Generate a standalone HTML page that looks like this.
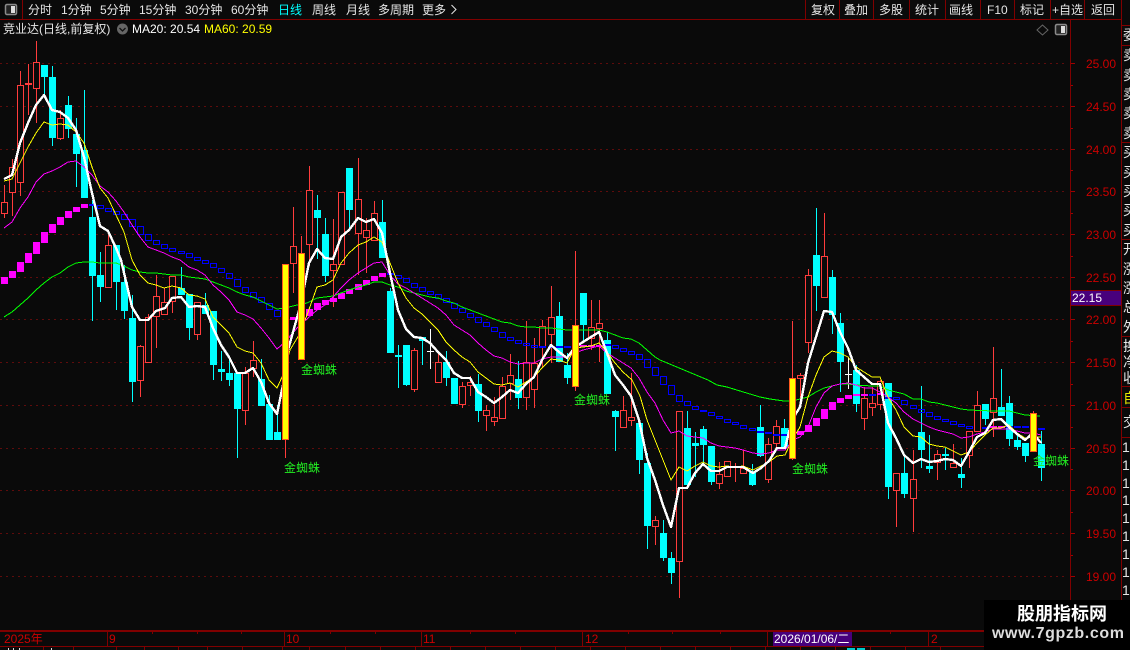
<!DOCTYPE html>
<html><head><meta charset="utf-8"><style>
html,body{margin:0;padding:0;background:#0a0a0a;width:1130px;height:650px;overflow:hidden}
svg{display:block}
text{font-family:"Liberation Sans","WenQuanYi Zen Hei","Noto Sans CJK SC",sans-serif;font-size:12px}
</style></head><body>
<svg width="1130" height="650" viewBox="0 0 1130 650" xmlns="http://www.w3.org/2000/svg">
<rect width="1130" height="650" fill="#0a0a0a"/>
<g shape-rendering="crispEdges">
<!-- grid -->
<path d="M0 63.5H1068M0 106.5H1068M0 149.5H1068M0 191.5H1068M0 234.5H1068M0 277.5H1068M0 319.5H1068M0 362.5H1068M0 405.5H1068M0 448.5H1068M0 490.5H1068M0 533.5H1068M0 576.5H1068" stroke="#5e0c0c" stroke-width="1" stroke-dasharray="2 4" fill="none"/>
<!-- frame -->
<path d="M0 19.5H1121M1070.5 20V630M1121.5 0V646M0 630.5H984M0 646.5H984M1122 25.5H1130M1122 45.5H1130M1122 142.5H1130M1122 239.5H1130M1122 336.5H1130M1122 386.5H1130M1122 407.5H1130M1122 437.5H1130M22.5 0V19M805.5 0V19M839.5 0V19M873.5 0V19M909.5 0V19M945.5 0V19M980.5 0V19M1014.5 0V19M1050.5 0V19M1084.5 0V19M107.5 631V646M284.5 631V646M421.5 631V646M582.5 631V646M767.5 631V646M928.5 631V646" stroke="#800000" fill="none"/>
<path d="M0 631.5H984" stroke="#800000"/>
<path d="M152.5 631V634M197.5 631V634M241.5 631V634M330.5 631V634M375.5 631V634M470.5 631V634M515.5 631V634M628.5 631V634M672.5 631V634M720.5 631V634M851.5 631V634M890.5 631V634M43.5 647V650M73.5 647V650M116.5 647V650M144.5 647V650M178.5 647V650M207.5 647V650M242.5 647V650M282.5 647V650M309.5 647V650M345.5 647V650M380.5 647V650M415.5 647V650M450.5 647V650M485.5 647V650M520.5 647V650M555.5 647V650M590.5 647V650M625.5 647V650M660.5 647V650M695.5 647V650M730.5 647V650M765.5 647V650M800.5 647V650M835.5 647V650M870.5 647V650M905.5 647V650M940.5 647V650" stroke="#800000" fill="none"/>
<!-- axis ticks -->
<path d="M1071 63.5H1075M1071 106.5H1075M1071 149.5H1075M1071 191.5H1075M1071 234.5H1075M1071 277.5H1075M1071 319.5H1075M1071 362.5H1075M1071 405.5H1075M1071 448.5H1075M1071 490.5H1075M1071 533.5H1075M1071 576.5H1075M1071 85.5H1073M1071 128.5H1073M1071 170.5H1073M1071 213.5H1073M1071 256.5H1073M1071 298.5H1073M1071 341.5H1073M1071 384.5H1073M1071 427.5H1073M1071 469.5H1073M1071 512.5H1073M1071 555.5H1073" stroke="#a00000" fill="none"/>
<!-- cyan wicks -->
<path fill="none" stroke="#00ffff" d="M44.5 65V95M52.5 66V146M68.5 96V138M76.5 118V187M84.5 90V198M92.5 200V321M100.5 252V302M116.5 245V310M124.5 265V319M132.5 295V402M181.5 267V295M189.5 294V340M205.5 293V314M213.5 311V380M221.5 351V381M229.5 357V386M237.5 373V458M261.5 359V406M269.5 395V440M277.5 405V440M317.5 195V259M325.5 218V282M349.5 168V230M382.5 200V258M390.5 288V353M398.5 345V388M406.5 345V386M422.5 337V365M446.5 351V386M454.5 378V404M478.5 374V422M518.5 361V409M559.5 302V362M567.5 353V384M583.5 293V343M607.5 332V394M615.5 410V451M639.5 423V474M647.5 453V549M663.5 520V561M671.5 552V584M687.5 411V485M695.5 432V477M703.5 426V463M711.5 446V485M752.5 464V486M760.5 405V457M784.5 419V447M816.5 208V311M832.5 270V334M840.5 313V392M856.5 365V412M888.5 383V499M904.5 457V498M921.5 386V468M929.5 435V473M945.5 448V470M961.5 458V488M985.5 404V425M1001.5 369V416M1009.5 396V446M1017.5 433V450M1025.5 443V462M1041.5 431V481"/>
<!-- cyan bodies -->
<path fill="#00ffff" d="M41 65h7V77h-7zM49 77h7V138h-7zM65 105h7V129h-7zM73 134h7V154h-7zM81 150h7V198h-7zM89 217h7V276h-7zM97 275h7V287h-7zM113 245h7V282h-7zM121 282h7V311h-7zM129 318h7V382h-7zM178 288h7V295h-7zM186 294h7V328h-7zM202 305h7V314h-7zM210 311h7V365h-7zM218 369h7V372h-7zM226 373h7V380h-7zM234 373h7V409h-7zM258 379h7V406h-7zM266 404h7V440h-7zM274 432h7V440h-7zM314 210h7V218h-7zM322 234h7V276h-7zM346 168h7V210h-7zM379 222h7V258h-7zM387 291h7V353h-7zM395 355h7V357h-7zM403 345h7V385h-7zM419 337h7V341h-7zM443 362h7V378h-7zM451 378h7V404h-7zM475 384h7V411h-7zM515 379h7V398h-7zM556 316h7V362h-7zM564 365h7V378h-7zM580 293h7V325h-7zM604 340h7V394h-7zM612 411h7V417h-7zM636 423h7V460h-7zM644 463h7V526h-7zM660 533h7V558h-7zM668 558h7V573h-7zM684 428h7V485h-7zM692 443h7V446h-7zM700 429h7V445h-7zM708 446h7V482h-7zM749 472h7V485h-7zM757 427h7V456h-7zM781 428h7V447h-7zM813 255h7V286h-7zM829 277h7V315h-7zM837 323h7V362h-7zM853 370h7V404h-7zM885 383h7V487h-7zM901 473h7V494h-7zM918 432h7V450h-7zM926 466h7V469h-7zM942 454h7V456h-7zM958 474h7V478h-7zM982 404h7V419h-7zM998 407h7V416h-7zM1006 403h7V439h-7zM1014 440h7V447h-7zM1022 443h7V456h-7zM1038 444h7V468h-7z"/>
<!-- white dojis -->
<path fill="none" stroke="#fff" d="M430.5 329V369M427 351.5h7M848.5 357V389M845 374.5h7"/>
<!-- red wicks -->
<path fill="none" stroke="#ff3c3c" d="M4.5 185V218M12.5 159V216M20.5 71V196M28.5 64V115M36.5 41V123M60.5 110V140M108.5 235V288M140.5 345V397M148.5 314V363M156.5 275V348M164.5 288V315M172.5 276V313M197.5 302V340M245.5 367V425M253.5 341V377M285.5 440V458M293.5 207V293M301.5 236V253M309.5 166V266M333.5 219V307M358.5 158V275M366.5 218V273M374.5 201V241M414.5 348V392M438.5 354V383M462.5 382V408M470.5 376V396M486.5 405V431M494.5 397V426M502.5 377V419M510.5 354V400M526.5 321V410M534.5 338V408M542.5 320V368M551.5 286V363M575.5 251V391M591.5 300V350M599.5 300V362M623.5 396V428M631.5 373V426M655.5 516V545M679.5 562V598M719.5 462V489M735.5 463V482M743.5 450V474M768.5 438V483M776.5 420V447M792.5 321V460M800.5 373V403M808.5 269V353M824.5 213V298M864.5 387V430M872.5 387V416M880.5 380V410M896.5 473V527M913.5 450V532M937.5 450V480M953.5 444V468M969.5 431V468M977.5 391V432M993.5 347V437M1033.5 411V452"/>
<!-- red bodies -->
<path fill="#0a0a0a" stroke="#ff3c3c" d="M1.5 202.5h6V213.5h-6zM9.5 167.5h6V192.5h-6zM17.5 85.5h6V182.5h-6zM33.5 62.5h6V88.5h-6zM57.5 118.5h6V138.5h-6zM105.5 245.5h6V287.5h-6zM137.5 346.5h6V380.5h-6zM145.5 317.5h6V362.5h-6zM153.5 296.5h6V316.5h-6zM161.5 302.5h6V314.5h-6zM169.5 276.5h6V301.5h-6zM194.5 302.5h6V334.5h-6zM242.5 373.5h6V410.5h-6zM250.5 360.5h6V368.5h-6zM290.5 246.5h6V263.5h-6zM306.5 190.5h6V244.5h-6zM330.5 264.5h6V270.5h-6zM338.5 192.5h6V264.5h-6zM355.5 199.5h6V233.5h-6zM363.5 230.5h6V237.5h-6zM371.5 213.5h6V240.5h-6zM411.5 350.5h6V389.5h-6zM435.5 362.5h6V382.5h-6zM459.5 386.5h6V404.5h-6zM467.5 382.5h6V385.5h-6zM483.5 410.5h6V415.5h-6zM491.5 417.5h6V421.5h-6zM499.5 386.5h6V418.5h-6zM507.5 375.5h6V383.5h-6zM523.5 362.5h6V397.5h-6zM531.5 363.5h6V389.5h-6zM539.5 326.5h6V346.5h-6zM548.5 317.5h6V334.5h-6zM588.5 327.5h6V338.5h-6zM596.5 323.5h6V328.5h-6zM620.5 410.5h6V427.5h-6zM628.5 417.5h6V420.5h-6zM652.5 520.5h6V526.5h-6zM676.5 411.5h6V561.5h-6zM716.5 474.5h6V483.5h-6zM724.5 461.5h6V476.5h-6zM740.5 468.5h6V473.5h-6zM765.5 444.5h6V479.5h-6zM773.5 426.5h6V443.5h-6zM797.5 375.5h6V378.5h-6zM805.5 275.5h6V342.5h-6zM821.5 256.5h6V297.5h-6zM861.5 398.5h6V418.5h-6zM869.5 403.5h6V407.5h-6zM877.5 381.5h6V404.5h-6zM893.5 473.5h6V490.5h-6zM910.5 479.5h6V498.5h-6zM934.5 454.5h6V462.5h-6zM950.5 463.5h6V467.5h-6zM966.5 431.5h6V455.5h-6zM974.5 405.5h6V431.5h-6zM990.5 398.5h6V412.5h-6z"/>
<rect x="25" y="83" width="7" height="2" fill="#ff3c3c"/>
<!-- blue boxes -->
<path fill="none" stroke="#0000ff" d="M97.5 205.5h6V208.5h-6zM105.5 208.5h6V211.5h-6zM113.5 211.5h6V214.5h-6zM121.5 214.5h6V219.5h-6zM129.5 219.5h6V226.5h-6zM137.5 226.5h6V234.5h-6zM145.5 234.5h6V240.5h-6zM153.5 240.5h6V244.5h-6zM161.5 244.5h6V248.5h-6zM169.5 248.5h6V251.5h-6zM178.5 251.5h6V253.5h-6zM186.5 253.5h6V257.5h-6zM194.5 257.5h6V260.5h-6zM202.5 260.5h6V263.5h-6zM210.5 263.5h6V267.5h-6zM218.5 268.5h6V272.5h-6zM226.5 273.5h6V278.5h-6zM234.5 279.5h6V286.5h-6zM242.5 287.5h6V292.5h-6zM250.5 292.5h6V297.5h-6zM258.5 297.5h6V302.5h-6zM266.5 303.5h6V309.5h-6zM274.5 310.5h6V316.5h-6zM395.5 275.5h6V278.5h-6zM403.5 278.5h6V282.5h-6zM411.5 283.5h6V287.5h-6zM419.5 287.5h6V291.5h-6zM427.5 291.5h6V294.5h-6zM435.5 294.5h6V298.5h-6zM443.5 298.5h6V302.5h-6zM451.5 303.5h6V308.5h-6zM459.5 308.5h6V312.5h-6zM467.5 313.5h6V317.5h-6zM475.5 317.5h6V322.5h-6zM483.5 322.5h6V326.5h-6zM491.5 327.5h6V331.5h-6zM499.5 332.5h6V337.5h-6zM507.5 337.5h6V340.5h-6zM515.5 340.5h6V343.5h-6zM523.5 343.5h6V345.5h-6zM531.5 345.5h6V347.5h-6zM612.5 345.5h6V348.5h-6zM620.5 348.5h6V351.5h-6zM628.5 351.5h6V354.5h-6zM636.5 354.5h6V359.5h-6zM644.5 359.5h6V367.5h-6zM652.5 367.5h6V375.5h-6zM660.5 376.5h6V384.5h-6zM668.5 385.5h6V394.5h-6zM676.5 395.5h6V401.5h-6zM684.5 401.5h6V405.5h-6zM692.5 406.5h6V409.5h-6zM700.5 410.5h6V411.5h-6zM708.5 412.5h6V415.5h-6zM716.5 416.5h6V418.5h-6zM724.5 419.5h6V422.5h-6zM732.5 422.5h6V424.5h-6zM740.5 425.5h6V428.5h-6zM749.5 428.5h6V430.5h-6zM885.5 397.5h6V398.5h-6zM893.5 397.5h6V399.5h-6zM901.5 400.5h6V404.5h-6zM910.5 405.5h6V408.5h-6zM918.5 409.5h6V412.5h-6zM926.5 412.5h6V416.5h-6zM934.5 416.5h6V419.5h-6zM942.5 419.5h6V421.5h-6zM950.5 421.5h6V424.5h-6zM958.5 424.5h6V426.5h-6zM966.5 426.5h6V428.5h-6zM1022.5 426.5h6V427.5h-6z"/>
<path fill="#0000ff" d="M89 204h7v2h-7zM282 318h7v2h-7zM387 273h7v2h-7zM539 346h7v2h-7zM548 346h7v2h-7zM556 346h7v2h-7zM564 346h7v2h-7zM604 344h7v2h-7zM757 431h7v2h-7zM765 432h7v2h-7zM773 434h7v2h-7zM781 434h7v2h-7zM869 394h7v2h-7zM982 427h7v2h-7zM1006 426h7v2h-7zM1014 426h7v2h-7zM1030 428h7v2h-7zM1038 428h7v2h-7z"/>
<!-- magenta boxes -->
<path fill="#ff00ff" d="M1 277h7V284h-7zM9 271h7V278h-7zM17 262h7V272h-7zM25 253h7V263h-7zM33 242h7V254h-7zM41 232h7V243h-7zM49 224h7V233h-7zM57 217h7V225h-7zM65 211h7V218h-7zM73 207h7V212h-7zM81 204h7V208h-7zM290 317h7V320h-7zM306 309h7V316h-7zM314 303h7V310h-7zM322 300h7V305h-7zM330 298h7V302h-7zM338 293h7V299h-7zM346 289h7V294h-7zM355 284h7V290h-7zM363 280h7V285h-7zM371 276h7V281h-7zM379 273h7V277h-7zM572 345h7V348h-7zM580 345h7V347h-7zM588 345h7V347h-7zM596 345h7V347h-7zM797 431h7V435h-7zM805 425h7V432h-7zM813 418h7V426h-7zM821 409h7V419h-7zM829 402h7V410h-7zM837 398h7V403h-7zM845 395h7V399h-7zM853 394h7V396h-7zM861 394h7V396h-7zM877 393h7V395h-7zM990 426h7V428h-7zM998 426h7V428h-7z"/>
</g>
<!-- MA lines -->
<g fill="none" stroke-linejoin="round" shape-rendering="crispEdges">
<polyline stroke="#00ff00" stroke-width="1" points="4,317 12,312 20,305 28,298 36,290 44,283 52,277 60,273 68,267 76,263 84,262 92,262 100,263 108,263 116,263 124,266 132,270 140,272 148,273 156,273 164,274 172,275 181,275 189,277 197,278 205,279 213,282 221,285 229,288 237,292 245,295 253,297 261,301 269,305 277,309 285,308 297,305 307,303 317,298 325,297 333,296 341,293 349,290 358,287 366,285 374,282 382,282 390,285 398,287 406,291 414,293 422,295 430,297 438,298 446,301 454,303 462,307 470,310 478,313 486,316 494,319 502,322 510,323 518,326 526,327 534,327 542,328 551,328 559,329 567,330 575,330 583,330 591,330 599,330 607,332 615,335 623,338 631,339 639,343 647,350 655,357 660,360 708,380 717,385 727,387 740,391 750,394 760,397 770,399 784,401 792,401 800,399 808,397 816,392 824,388 832,386 840,384 848,384 856,385 872,386 880,386 888,390 896,392 904,394 913,399 921,399 929,402 937,403 945,405 953,407 961,409 969,410 993,411 1009,411 1017,413 1025,415 1040,416"/>
<polyline stroke="#ff00ff" stroke-width="1" points="4,228 12,222 20,208 28,197 36,182 44,174 52,171 60,167 68,162 76,161 84,167 92,175 100,186 108,192 116,201 124,212 132,225 140,237 148,247 156,250 164,253 172,257 180,260 189,267 197,270 205,275 213,285 221,292 229,300 237,312 245,315 253,319 261,328 269,338 277,349 285,342 298,327 317,310 325,305 333,297 341,288 349,280 358,273 366,268 374,263 382,262 390,275 398,284 406,288 414,293 422,298 430,303 438,308 446,315 454,325 462,330 470,335 478,343 486,350 494,356 502,358 510,362 518,364 526,363 534,363 542,359 551,357 559,357 567,357 575,353 583,350 591,348 599,346 607,353 615,358 623,363 631,368 639,378 647,392 655,403 663,420 671,433 679,431 687,436 695,437 703,438 711,443 719,446 727,447 735,448 743,450 753,453 761,454 769,453 777,450 785,450 793,440 800,437 808,427 816,407 824,393 832,386 840,384 848,383 856,385 864,388 872,388 880,392 888,397 896,403 904,412 913,419 921,423 929,427 937,430 945,432 953,434 961,438 969,437 977,434 985,432 993,429 1001,429 1009,429 1017,431 1025,433 1033,433 1041,435"/>
<polyline stroke="#ffff00" stroke-width="1" points="4,181 12,179 20,163 28,147 36,133 44,122 52,125 60,124 68,125 76,132 84,143 92,167 100,188 108,198 116,215 124,232 132,260 140,275 148,283 156,285 164,288 172,286 181,288 189,295 197,296 205,299 213,317 221,325 229,333 237,347 245,351 253,353 261,363 269,380 277,388 283,375 290,350 299,335 307,315 317,287 325,285 333,280 341,263 349,253 358,245 366,242 374,237 382,242 390,263 398,283 406,298 414,308 422,314 430,322 438,330 446,342 454,350 462,357 470,362 478,372 486,378 494,384 502,385 510,383 518,387 526,382 534,377 542,368 551,359 559,360 567,363 575,348 583,347 591,346 599,343 607,352 615,363 623,372 632,380 640,396 647,420 655,440 663,460 671,480 679,467 687,471 695,466 703,462 711,466 719,467 727,466 735,467 743,466 753,470 761,466 769,462 777,456 785,455 792,440 800,427 808,397 816,375 824,357 832,351 840,353 848,357 856,367 864,372 872,377 880,377 888,397 896,410 904,427 913,436 921,437 929,444 937,446 945,447 953,451 961,455 969,452 977,443 985,435 993,428 1001,428 1009,425 1017,433 1025,438 1033,437 1041,437"/>
<polyline stroke="#ffffff" stroke-width="2.4" points="4,179 12,175 20,143 28,123 36,105 44,95 52,110 60,112 68,118 76,130 84,157 92,193 100,226 108,231 116,248 121,260 132,307 140,320 148,320 156,311 165,308 172,298 181,297 189,307 197,306 205,307 213,328 221,345 229,357 237,373 245,373 253,368 261,382 269,403 277,414 285,375 288,350 300,307 309,263 317,249 325,258 333,259 341,237 349,230 358,218 366,222 374,219 382,233 390,273 398,310 406,329 414,337 422,338 430,343 438,352 446,360 454,373 462,378 470,378 478,392 486,397 494,403 502,397 510,390 518,393 526,384 534,377 542,360 551,345 559,352 567,358 575,347 583,342 591,337 599,332 607,353 615,375 623,385 631,396 639,420 647,458 655,480 663,505 671,527 679,488 687,488 695,473 703,464 711,471 719,471 727,467 735,467 743,467 753,473 761,468 769,461 777,448 785,448 792,420 800,407 808,363 816,337 824,311 832,312 840,332 848,348 856,370 864,377 872,384 880,384 888,423 896,438 904,455 913,463 921,459 929,462 937,461 945,459 953,460 961,466 969,452 977,437 985,433 993,420 1001,419 1009,427 1017,434 1025,440 1033,433 1041,443"/>
</g>
<!-- signal bars -->
<g shape-rendering="crispEdges" fill="#ffff00" stroke="#ff5a1e">
<rect x="282.5" y="264.5" width="6" height="175"/>
<rect x="298.5" y="253.5" width="6" height="106"/>
<rect x="572.5" y="325.5" width="6" height="61"/>
<rect x="789.5" y="378.5" width="6" height="80"/>
<rect x="1030.5" y="413.5" width="6" height="38"/>
</g>
<!-- signal labels -->
<g fill="#22ee22">
<text x="284" y="472">金蜘蛛</text>
<text x="301" y="374">金蜘蛛</text>
<text x="574" y="404">金蜘蛛</text>
<text x="792" y="473">金蜘蛛</text>
<text x="1033" y="465">金蜘蛛</text>
</g>
<!-- top left icon -->
<rect x="5.5" y="4.5" width="11" height="10" rx="1.5" fill="#222" stroke="#8a8a8a" stroke-width="1.5"/>
<rect x="11" y="6" width="4" height="7" fill="#ddd"/>
<!-- top tabs -->
<g fill="#e6e6e6">
<text x="28" y="14">分时</text>
<text x="61" y="14">1分钟</text>
<text x="100" y="14">5分钟</text>
<text x="139" y="14">15分钟</text>
<text x="185" y="14">30分钟</text>
<text x="231" y="14">60分钟</text>
<text x="278" y="14" fill="#00ffff">日线</text>
<text x="312" y="14">周线</text>
<text x="346" y="14">月线</text>
<text x="378" y="14">多周期</text>
<text x="422" y="14">更多</text>
<text x="811" y="14">复权</text>
<text x="844" y="14">叠加</text>
<text x="879" y="14">多股</text>
<text x="915" y="14">统计</text>
<text x="949" y="14">画线</text>
<text x="987" y="14">F10</text>
<text x="1020" y="14">标记</text>
<text x="1052" y="14">+自选</text>
<text x="1091" y="14">返回</text>
</g>
<path d="M451.5 5L456 9.5L451.5 14" fill="none" stroke="#e6e6e6"/>
<!-- second row -->
<text x="3" y="33" fill="#e6e6e6">竞业达(日线,前复权)</text>
<circle cx="122.5" cy="29" r="5.5" fill="#666"/>
<path d="M119.5 28L122.5 31L125.5 28" fill="none" stroke="#111" stroke-width="1.3"/>
<text x="132" y="33" fill="#fff">MA20: 20.54</text>
<text x="204" y="33" fill="#ffff00">MA60: 20.59</text>
<path d="M1042.5 25L1048 30L1042.5 35L1037 30Z" fill="none" stroke="#666"/>
<rect x="1055.5" y="24.5" width="11" height="10" rx="1.5" fill="#222" stroke="#8a8a8a" stroke-width="1.5"/>
<rect x="1061" y="26" width="4" height="7" fill="#ddd"/>
<!-- price labels -->
<g fill="#cc0000">
<text x="1086" y="68">25.00</text>
<text x="1086" y="111">24.50</text>
<text x="1086" y="154">24.00</text>
<text x="1086" y="196">23.50</text>
<text x="1086" y="239">23.00</text>
<text x="1086" y="282">22.50</text>
<text x="1086" y="324">22.00</text>
<text x="1086" y="367">21.50</text>
<text x="1086" y="410">21.00</text>
<text x="1086" y="453">20.50</text>
<text x="1086" y="495">20.00</text>
<text x="1086" y="538">19.50</text>
<text x="1086" y="581">19.00</text>
</g>
<rect x="1071" y="290" width="50" height="16" fill="#48007c"/>
<path d="M1071 290.5H1121M1071 305.5H1121" stroke="#800000" shape-rendering="crispEdges"/>
<text x="1072" y="302" fill="#fff">22.15</text>
<!-- right column -->
<g fill="#e6e6e6">
<text x="1123" y="40" style="font-size:14px">委比</text>
<text x="1123" y="60" style="font-size:14px">卖五</text>
<text x="1123" y="80" style="font-size:14px">卖四</text>
<text x="1123" y="99" style="font-size:14px">卖三</text>
<text x="1123" y="118" style="font-size:14px">卖二</text>
<text x="1123" y="138" style="font-size:14px">卖一</text>
<text x="1123" y="157" style="font-size:14px">买一</text>
<text x="1123" y="177" style="font-size:14px">买二</text>
<text x="1123" y="196" style="font-size:14px">买三</text>
<text x="1123" y="215" style="font-size:14px">买四</text>
<text x="1123" y="235" style="font-size:14px">买五</text>
<text x="1123" y="254" style="font-size:14px">开盘</text>
<text x="1123" y="274" style="font-size:14px">涨跌</text>
<text x="1123" y="293" style="font-size:14px">涨幅</text>
<text x="1123" y="312" style="font-size:14px">总量</text>
<text x="1123" y="332" style="font-size:14px">外盘</text>
<text x="1123" y="351" style="font-size:14px">换手</text>
<text x="1123" y="367" style="font-size:14px">净资</text>
<text x="1123" y="383" style="font-size:14px">收益</text>
<text x="1123" y="403" fill="#e6e600" style="font-size:14px">自选</text>
<text x="1123" y="427" style="font-size:14px">交易</text>
<text x="1122" y="452" style="font-size:14px">1</text>
<text x="1122" y="470" style="font-size:14px">1</text>
<text x="1122" y="488" style="font-size:14px">1</text>
<text x="1122" y="505" style="font-size:14px">1</text>
<text x="1122" y="523" style="font-size:14px">1</text>
<text x="1122" y="541" style="font-size:14px">1</text>
<text x="1122" y="559" style="font-size:14px">1</text>
<text x="1122" y="577" style="font-size:14px">1</text>
<text x="1122" y="595" style="font-size:14px">1</text>
</g>
<!-- x axis labels -->
<g fill="#cc0000">
<text x="4" y="643">2025年</text>
<text x="109" y="643">9</text>
<text x="286" y="643">10</text>
<text x="423" y="643">11</text>
<text x="585" y="643">12</text>
<text x="931" y="643">2</text>
</g>
<rect x="773" y="632" width="79" height="14" fill="#48007c"/>
<text x="774" y="643" fill="#fff">2026/01/06/二</text>
<path d="M8 648h1v2h-1zM13 648h1v2h-1zM19 648h1v2h-1zM51 648h1v2h-1z" fill="#ddd"/>
<rect x="847" y="648" width="8" height="2" fill="#00cccc"/>
<rect x="857" y="648" width="8" height="2" fill="#00cccc"/>
<!-- watermark -->
<rect x="984" y="600" width="146" height="50" fill="#000"/>
<text x="1017" y="620" fill="#fff" style="font-size:18px;font-weight:bold;">股朋指标网</text>
<text x="992" y="638" fill="#ddd" style="font-size:16px;font-weight:bold;letter-spacing:.6px">www.7gpzb.com</text>
</svg>
</body></html>
